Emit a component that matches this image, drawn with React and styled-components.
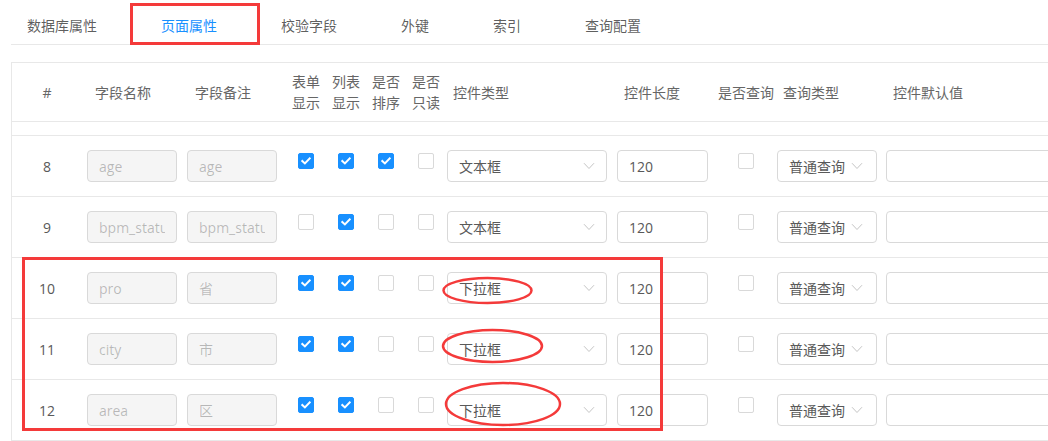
import React from "react";
import styled, { createGlobalStyle } from "styled-components";

const GlobalStyle = createGlobalStyle`
  html, body { margin: 0; padding: 0; background: #fff; overflow: hidden; }
  body {
    font-family: "Open Sans", "Noto Sans CJK SC", sans-serif;
    font-size: 14px;
    color: rgba(0, 0, 0, 0.65);
  }
  * { box-sizing: border-box; }
`;

const Page = styled.div`
  position: relative;
  width: 1048px;
  height: 441px;
  overflow: hidden;
`;

const TabBar = styled.div`
  display: flex;
  margin-left: 11px;
  height: 45px;
  border-bottom: 1px solid #e8e8e8;
`;

const Tab = styled.div`
  position: relative;
  display: flex;
  align-items: center;
  height: 44px;
  padding: 6px 16px 0;
  margin-right: 32px;
  font-size: 14px;
  white-space: nowrap;
  color: ${(p) => (p.$active ? "#1890ff" : "rgba(0,0,0,0.65)")};
  &::after {
    content: "";
    position: absolute;
    left: 0;
    right: 0;
    bottom: 0;
    height: 2px;
    background: ${(p) => (p.$active ? "#1890ff" : "transparent")};
  }
`;

const Table = styled.div`
  margin: 17px 0 0 11px;
  width: max-content;
  border-top: 1px solid #e8e8e8;
  border-left: 1px solid #e8e8e8;
`;

const COLS = [
  { key: "idx", w: 70, head: "#", hAlign: "center", hPad: 0 },
  { key: "name", w: 100, head: "字段名称", hPad: 13 },
  { key: "remark", w: 104, head: "字段备注", hPad: 13 },
  { key: "form", w: 40, head: ["表单", "显示"], hAlign: "center" },
  { key: "list", w: 40, head: ["列表", "显示"], hAlign: "center" },
  { key: "sort", w: 40, head: ["是否", "排序"], hAlign: "center" },
  { key: "ro", w: 40, head: ["是否", "只读"], hAlign: "center" },
  { key: "type", w: 166, head: "控件类型", hPad: 7 },
  { key: "len", w: 106, head: "控件长度", hPad: 12 },
  { key: "isq", w: 56, head: "是否查询", hAlign: "center" },
  { key: "qtype", w: 108, head: "查询类型", hPad: 9 },
  { key: "def", w: 218, head: "控件默认值", hPad: 11 },
];

const template = COLS.map((c) => `${c.w}px`).join(" ");

const HeaderRow = styled.div`
  display: grid;
  grid-template-columns: ${template};
  height: 59px;
  border-bottom: 1px solid #e8e8e8;
`;

const HeadCell = styled.div`
  display: flex;
  flex-direction: column;
  justify-content: center;
  align-items: ${(p) => (p.$align === "center" ? "center" : "flex-start")};
  padding-left: ${(p) => p.$pad || 0}px;
  font-size: 14px;
  line-height: 21px;
  color: #666;
  white-space: nowrap;
`;

const SpacerRow = styled.div`
  height: 14px;
  border-bottom: 1px solid #e8e8e8;
`;

const DataRow = styled.div`
  display: grid;
  grid-template-columns: ${template};
  height: 61px;
  border-bottom: 1px solid #e8e8e8;
`;

const Cell = styled.div`
  display: flex;
  align-items: center;
  justify-content: ${(p) => (p.$center ? "center" : "flex-start")};
  padding-left: ${(p) => p.$pad || 0}px;
  min-width: 0;
`;

const CheckCell = styled.div`
  display: flex;
  justify-content: center;
  align-items: flex-start;
  padding-top: 17px;
`;

const IndexText = styled.span`
  font-size: 14px;
  color: #595959;
`;

const Field = styled.div`
  display: flex;
  align-items: center;
  width: ${(p) => p.$w}px;
  flex: none;
  height: 32px;
  padding: 0 11px;
  border: 1px solid #d9d9d9;
  border-radius: 4px;
  background: ${(p) => (p.$disabled ? "#f5f5f5" : "#fff")};
  color: ${(p) => (p.$disabled ? "rgba(0,0,0,0.25)" : "#595959")};
  font-size: 14px;
  white-space: nowrap;
  overflow: hidden;
`;

const FieldText = styled.span`
  display: block;
  flex: 1;
  min-width: 0;
  overflow: hidden;
  white-space: nowrap;
`;

const SelectBox = styled(Field)`
  justify-content: space-between;
  padding-right: ${(p) => p.$pr || 11}px;
`;

const Box = styled.span`
  display: inline-flex;
  align-items: center;
  justify-content: center;
  width: 16px;
  height: 16px;
  border-radius: 2px;
  border: 1px solid ${(p) => (p.$on ? "#1890ff" : "#d9d9d9")};
  background: ${(p) => (p.$on ? "#1890ff" : "#fff")};
`;

const Overlay = styled.svg`
  position: absolute;
  left: 0;
  top: 0;
  pointer-events: none;
`;

function Check({ on }) {
  return (
    <Box $on={on}>
      {on && (
        <svg width="10" height="8" viewBox="0 0 10 8">
          <path d="M1.3 4 L3.9 6.4 L8.7 1.4" fill="none" stroke="#fff" strokeWidth="2" strokeLinecap="square" />
        </svg>
      )}
    </Box>
  );
}

function Arrow() {
  return (
    <svg width="12" height="8" viewBox="0 0 12 8">
      <path d="M1 1.2 L6 6.5 L11 1.2" fill="none" stroke="#c4c4c4" strokeWidth="1" />
    </svg>
  );
}

const ROWS = [
  { n: 8, name: "age", remark: "age", checks: [1, 1, 1, 0], type: "文本框" },
  { n: 9, name: "bpm_status", remark: "bpm_status", checks: [0, 1, 0, 0], type: "文本框" },
  { n: 10, name: "pro", remark: "省", checks: [1, 1, 0, 0], type: "下拉框" },
  { n: 11, name: "city", remark: "市", checks: [1, 1, 0, 0], type: "下拉框" },
  { n: 12, name: "area", remark: "区", checks: [1, 1, 0, 0], type: "下拉框" },
];

const TABS = ["数据库属性", "页面属性", "校验字段", "外键", "索引", "查询配置"];

export default function App() {
  return (
    <Page>
      <GlobalStyle />
      <TabBar>
        {TABS.map((t, i) => (
          <Tab key={t} $active={i === 1}>
            {t}
          </Tab>
        ))}
      </TabBar>
      <Table>
        <HeaderRow>
          {COLS.map((c) => (
            <HeadCell key={c.key} $align={c.hAlign} $pad={c.hPad}>
              {Array.isArray(c.head) ? c.head.map((l, i) => <span key={i}>{l}</span>) : c.head}
            </HeadCell>
          ))}
        </HeaderRow>
        <SpacerRow />
        {ROWS.map((r) => (
          <DataRow key={r.n}>
            <Cell $center>
              <IndexText>{r.n}</IndexText>
            </Cell>
            <Cell $pad={5}>
              <Field $w={90} $disabled>
                <FieldText>{r.name}</FieldText>
              </Field>
            </Cell>
            <Cell $pad={5}>
              <Field $w={90} $disabled>
                <FieldText>{r.remark}</FieldText>
              </Field>
            </Cell>
            {r.checks.map((c, i) => (
              <CheckCell key={i}>
                <Check on={!!c} />
              </CheckCell>
            ))}
            <Cell $pad={1}>
              <SelectBox $w={160}>
                <span>{r.type}</span>
                <Arrow />
              </SelectBox>
            </Cell>
            <Cell $pad={5}>
              <Field $w={91}>
                <FieldText>120</FieldText>
              </Field>
            </Cell>
            <CheckCell>
              <Check on={false} />
            </CheckCell>
            <Cell $pad={3}>
              <SelectBox $w={100} $pr={13}>
                <span>普通查询</span>
                <Arrow />
              </SelectBox>
            </Cell>
            <Cell $pad={4}>
              <Field $w={200} />
            </Cell>
          </DataRow>
        ))}
      </Table>
      <Overlay width="1048" height="441" viewBox="0 0 1048 441">
        <g fill="none" stroke="#f43a3a">
          <rect x="131.5" y="4.5" width="127" height="39" strokeWidth="3" />
          <rect x="23.5" y="258.5" width="638" height="171" strokeWidth="3" />
          <ellipse cx="487.5" cy="290.5" rx="44" ry="12.5" strokeWidth="2.5" />
          <ellipse cx="492.5" cy="346" rx="49.5" ry="16" strokeWidth="2.5" />
          <ellipse cx="503" cy="404" rx="57" ry="21" strokeWidth="2.5" />
        </g>
      </Overlay>
    </Page>
  );
}
